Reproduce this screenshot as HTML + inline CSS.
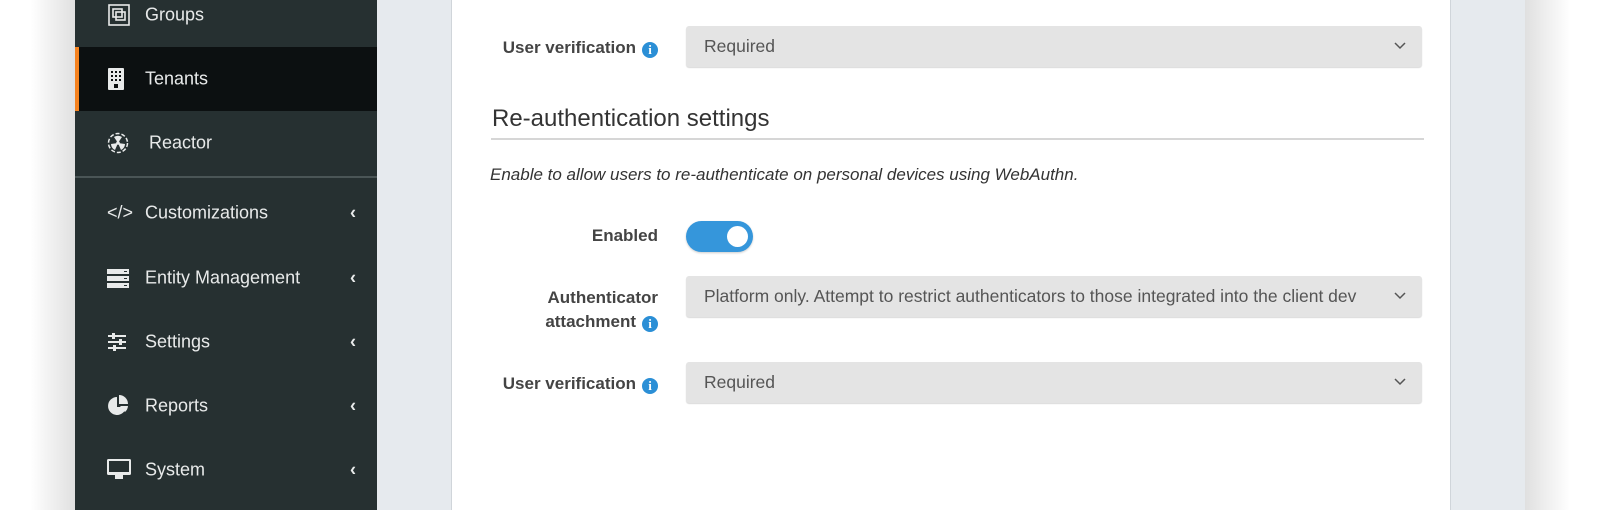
<!DOCTYPE html>
<html><head><meta charset="utf-8"><style>
*{box-sizing:border-box;margin:0;padding:0}
body{width:1600px;height:510px;overflow:hidden;background:#fff;font-family:"Liberation Sans",sans-serif;position:relative}
.shadowL{position:absolute;left:30px;top:0;width:45px;height:510px;background:linear-gradient(to right,rgba(0,0,0,0),rgba(0,0,0,.12))}
.shadowR{position:absolute;left:1525px;top:0;width:45px;height:510px;background:linear-gradient(to left,rgba(0,0,0,0),rgba(0,0,0,.12))}
.side{position:absolute;left:75px;top:0;width:302px;height:510px;background:#263031}
.item{position:absolute;left:0;width:302px;height:64px;color:#e8eaea;font-size:18px}
.item .t{position:absolute;left:70px;top:50%;transform:translateY(-50%)}
.item .ic{position:absolute;left:32px;top:50%;transform:translateY(-50%)}
.item .ch{position:absolute;left:275px;top:50%;transform:translateY(-50%);font-weight:bold}
.active{background:#0c1011;border-left:4px solid #f5821f}
.div{position:absolute;left:0;top:176px;width:302px;height:2px;background:#4a5556}
.main{position:absolute;left:377px;top:0;width:1148px;height:510px;background:#e6eaee}
.panel{position:absolute;left:451px;top:0;width:1000px;height:510px;background:#fff;border-left:1px solid #d0d5da;border-right:1px solid #d0d5da}
.lbl{position:absolute;right:942px;font-weight:bold;font-size:17px;color:#444;text-align:right;line-height:24px}
.info{display:inline-block;width:16px;height:16px;border-radius:50%;background:#2b8fd6;color:#fff;font-size:13px;line-height:16px;text-align:center;font-weight:bold;font-family:"Liberation Serif",serif;vertical-align:-1px;margin-left:6px}
.sel{position:absolute;left:686px;width:736px;height:41px;background:#e4e4e4;border-radius:3px;box-shadow:0 1px 1px rgba(0,0,0,.15);color:#555;font-size:17.5px;line-height:41px;padding-left:18px;white-space:nowrap;overflow:hidden}
.sel svg{position:absolute;right:16px;top:16px}
</style></head><body>
<div class="shadowL"></div><div class="shadowR"></div>
<div class="side">
 <div class="item" style="top:-17px"><svg class="ic" width="24" height="24" viewBox="0 0 24 24" fill="none" stroke="#e8eaea" stroke-width="1.6"><rect x="2" y="2" width="20" height="20"/><rect x="6" y="6" width="9" height="8"/><rect x="9" y="9" width="9" height="8"/></svg><span class="t">Groups</span></div>
 <div class="item active" style="top:47px"><svg class="ic" style="left:28px" width="18" height="22" viewBox="0 0 18 22"><rect x="1" y="0" width="16" height="22" rx="1" fill="#e8eaea"/><g fill="#0c1011"><rect x="4" y="3" width="2" height="2"/><rect x="8" y="3" width="2" height="2"/><rect x="12" y="3" width="2" height="2"/><rect x="4" y="7" width="2" height="2"/><rect x="8" y="7" width="2" height="2"/><rect x="12" y="7" width="2" height="2"/><rect x="4" y="11" width="2" height="2"/><rect x="8" y="11" width="2" height="2"/><rect x="12" y="11" width="2" height="2"/><rect x="7" y="16" width="4" height="4"/></g></svg><span class="t" style="left:66px">Tenants</span></div>
 <div class="item" style="top:111px"><svg class="ic" width="22" height="22" viewBox="0 0 22 22"><circle cx="11" cy="11" r="9.5" fill="none" stroke="#e8eaea" stroke-width="1.5" stroke-dasharray="4 2"/><circle cx="11" cy="11" r="1.8" fill="#e8eaea"/><path d="M11 11 L7 5 A7 7 0 0 1 15 5Z M11 11 L18 12 A7 7 0 0 1 14 18Z M11 11 L8 18 A7 7 0 0 1 4 12Z" fill="#e8eaea"/></svg><span class="t" style="left:74px">Reactor</span></div>
 <div class="div"></div>
 <div class="item" style="top:181px"><span class="ic" style="font-size:18px">&lt;/&gt;</span><span class="t">Customizations</span><span class="ch">‹</span></div>
 <div class="item" style="top:246px"><svg class="ic" width="22" height="20" viewBox="0 0 22 20" fill="#e8eaea"><rect x="0" y="1" width="22" height="5"/><rect x="0" y="8" width="22" height="5"/><rect x="0" y="15" width="22" height="5"/><g fill="#263031"><rect x="17" y="3" width="3" height="1"/><rect x="17" y="10" width="3" height="1"/><rect x="17" y="17" width="3" height="1"/></g></svg><span class="t">Entity Management</span><span class="ch">‹</span></div>
 <div class="item" style="top:310px"><svg class="ic" width="20" height="20" viewBox="0 0 20 20" fill="#e8eaea"><rect x="1" y="3" width="18" height="2"/><rect x="1" y="9" width="18" height="2"/><rect x="1" y="15" width="18" height="2"/><rect x="5" y="1" width="3" height="6"/><rect x="12" y="7" width="3" height="6"/><rect x="6" y="13" width="3" height="6"/></svg><span class="t">Settings</span><span class="ch">‹</span></div>
 <div class="item" style="top:374px"><svg class="ic" width="22" height="22" viewBox="0 0 22 22" fill="#e8eaea"><path d="M10 2 A9 9 0 1 0 19 12 L10 12Z"/><path d="M12 0 A9 9 0 0 1 21 9 L12 9Z"/><path d="M13 11 L21 11 A9 9 0 0 1 18 17Z"/></svg><span class="t">Reports</span><span class="ch">‹</span></div>
 <div class="item" style="top:438px"><svg class="ic" width="24" height="22" viewBox="0 0 24 22" fill="#e8eaea"><rect x="0" y="0" width="24" height="16" rx="1.5"/><rect x="2" y="2" width="20" height="11" fill="#263031"/><rect x="8" y="16" width="8" height="4"/></svg><span class="t">System</span><span class="ch">‹</span></div>
</div>
<div class="main"></div>
<div class="panel"></div>
<div class="lbl" style="top:36px">User verification<span class="info">i</span></div>
<div class="sel" style="top:26px">Required<svg width="12" height="8" viewBox="0 0 12 8"><path d="M1 1l5 5 5-5" fill="none" stroke="#555" stroke-width="1.5"/></svg></div>
<div style="position:absolute;left:492px;top:105px;font-size:24px;color:#333">Re-authentication settings</div>
<div style="position:absolute;left:491px;top:138px;width:933px;height:2px;background:#d6d6d6"></div>
<div style="position:absolute;left:490px;top:165px;font-size:17px;font-style:italic;color:#333">Enable to allow users to re-authenticate on personal devices using WebAuthn.</div>
<div class="lbl" style="top:224px">Enabled</div>
<div style="position:absolute;left:686px;top:221px;width:67px;height:31px;border-radius:16px;background:#3596db;box-shadow:0 1px 2px rgba(0,0,0,.2)"><div style="position:absolute;right:5px;top:5px;width:21px;height:21px;border-radius:50%;background:#fff"></div></div>
<div class="lbl" style="top:286px">Authenticator<br>attachment<span class="info">i</span></div>
<div class="sel" style="top:276px;padding-right:60px">Platform only. Attempt to restrict authenticators to those integrated into the client dev<svg width="12" height="8" viewBox="0 0 12 8"><path d="M1 1l5 5 5-5" fill="none" stroke="#555" stroke-width="1.5"/></svg></div>
<div class="lbl" style="top:372px">User verification<span class="info">i</span></div>
<div class="sel" style="top:362px">Required<svg width="12" height="8" viewBox="0 0 12 8"><path d="M1 1l5 5 5-5" fill="none" stroke="#555" stroke-width="1.5"/></svg></div>
</body></html>
